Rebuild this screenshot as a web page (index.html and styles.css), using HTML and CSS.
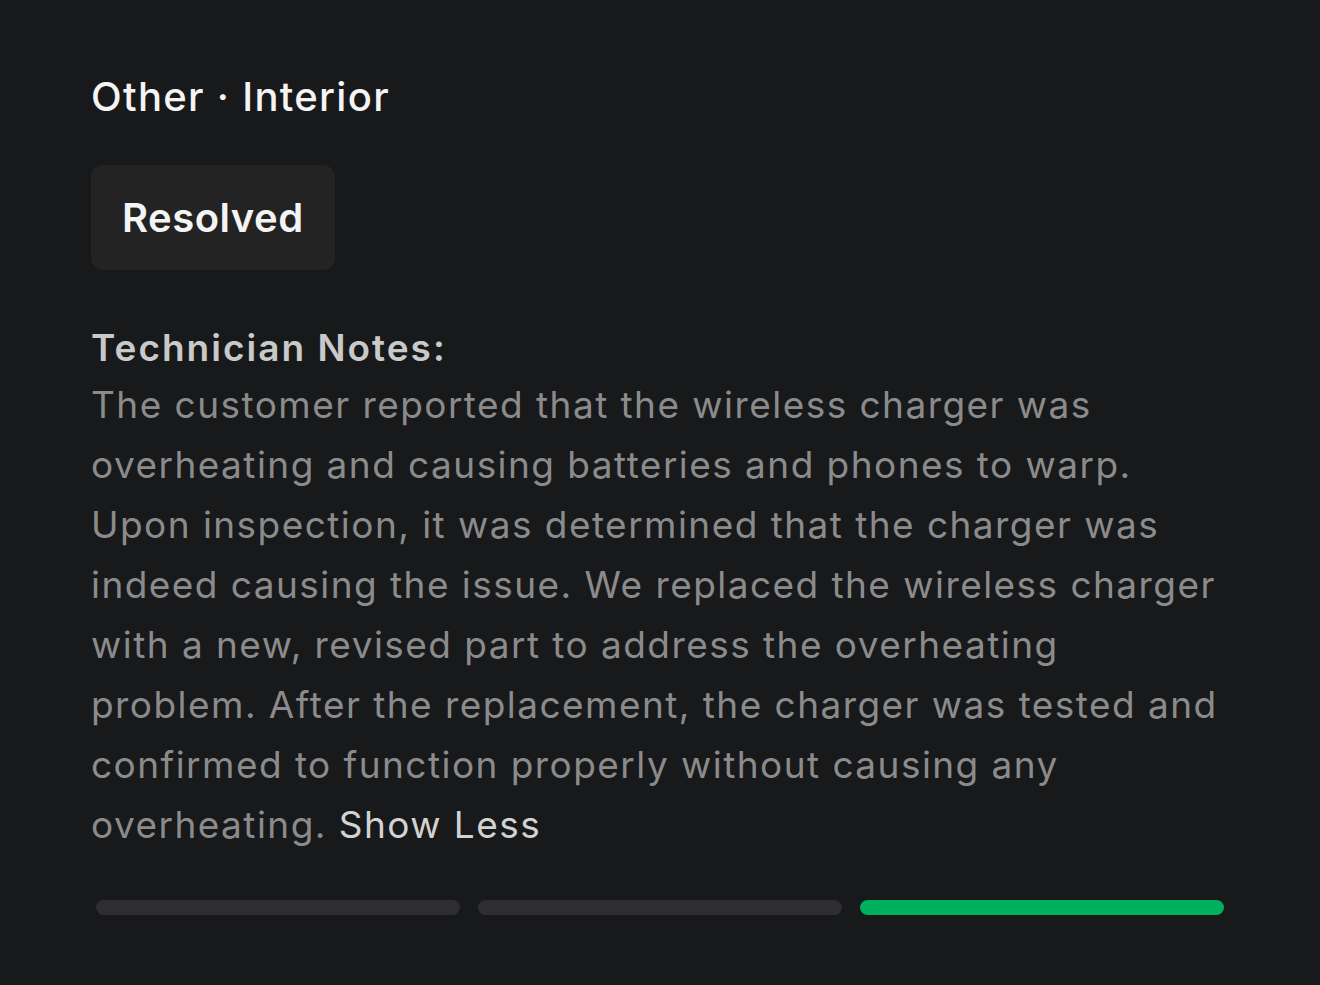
FILE: index.html
```html
<!DOCTYPE html>
<html>
<head>
<meta charset="utf-8">
<link rel="stylesheet" href="styles.css">
</head>
<body>
<div class="card">
  <h1 class="title">Other · Interior</h1>
  <div class="badge">Resolved</div>
  <div class="notes">
    <div class="notes-head">Technician Notes:</div>
    <p class="notes-body">The customer reported that the wireless charger was overheating and causing batteries and phones to warp. Upon inspection, it was determined that the charger was indeed causing the issue. We replaced the wireless charger with a new, revised part to address the overheating problem. After the replacement, the charger was tested and confirmed to function properly without causing any overheating. <span class="toggle">Show Less</span></p>
  </div>
  <div class="steps">
    <div class="step"></div>
    <div class="step"></div>
    <div class="step active"></div>
  </div>
</div>
</body>
</html>
```
FILE: styles.css
```css
html, body {
  margin: 0;
  padding: 0;
  background: #18191b;
  height: 100%;
}
body {
  font-family: Inter, "Noto Sans", sans-serif;
}
.card {
  padding: 72px 91px 0 91px;
}
.title {
  margin: 0;
  font-size: 40px;
  font-weight: 500;
  color: #f4f4f4;
  line-height: 50px;
  letter-spacing: 1.3px;
}
.badge {
  display: inline-block;
  margin-top: 43px;
  padding: 0 31px;
  height: 105px;
  line-height: 105px;
  background: #232323;
  border-radius: 12px;
  font-size: 40px;
  font-weight: 600;
  color: #f4f4f4;
  letter-spacing: 0.5px;
}
.notes {
  margin-top: 50px;
}
.notes-head {
  font-size: 37px;
  font-weight: 600;
  color: #c9c9c9;
  line-height: 55px;
  letter-spacing: 2px;
}
.notes-body {
  margin: 0;
  width: 1136px;
  font-size: 37px;
  font-weight: 400;
  color: #8b8b8b;
  line-height: 60px;
  letter-spacing: 1.45px;
}
.toggle {
  color: #d2d2d2;
}
.steps {
  display: flex;
  gap: 18px;
  margin: 45px 5px 0 5px;
  width: 1128px;
}
.step {
  flex: 1;
  height: 15px;
  border-radius: 8px;
  background: #2e2e30;
}
.step.active {
  background: #00b05c;
}
```
